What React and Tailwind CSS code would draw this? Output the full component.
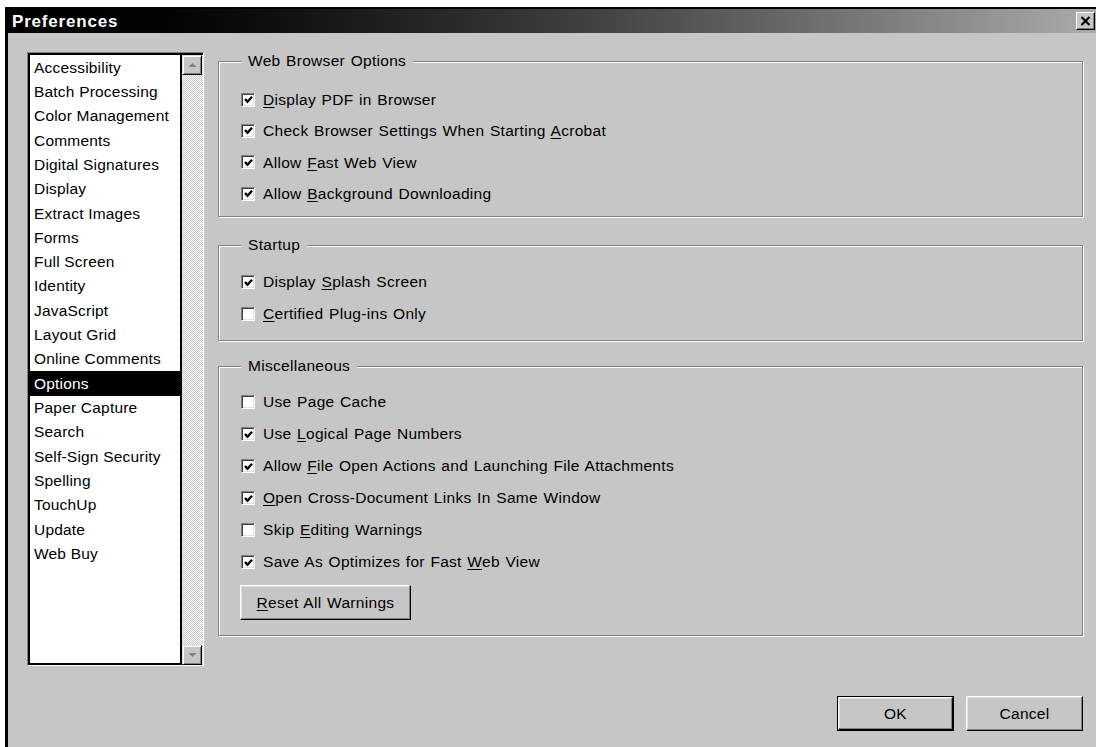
import React from 'react';

// Classic Win9x-style "Preferences" dialog: category list on the left,
// grouped option checkboxes on the right, OK / Cancel at the bottom.

const categories = [
  'Accessibility',
  'Batch Processing',
  'Color Management',
  'Comments',
  'Digital Signatures',
  'Display',
  'Extract Images',
  'Forms',
  'Full Screen',
  'Identity',
  'JavaScript',
  'Layout Grid',
  'Online Comments',
  'Options',
  'Paper Capture',
  'Search',
  'Self-Sign Security',
  'Spelling',
  'TouchUp',
  'Update',
  'Web Buy',
];

// label split as [before, access key, after]
const webOptions = [
  { parts: ['', 'D', 'isplay PDF in Browser'], checked: true },
  { parts: ['Check Browser Settings When Starting ', 'A', 'crobat'], checked: true },
  { parts: ['Allow ', 'F', 'ast Web View'], checked: true },
  { parts: ['Allow ', 'B', 'ackground Downloading'], checked: true },
];

const startupOptions = [
  { parts: ['Display ', 'S', 'plash Screen'], checked: true },
  { parts: ['', 'C', 'ertified Plug-ins Only'], checked: false },
];

const miscOptions = [
  { parts: ['Use Page Cache', '', ''], checked: false },
  { parts: ['Use ', 'L', 'ogical Page Numbers'], checked: true },
  { parts: ['Allow ', 'F', 'ile Open Actions and Launching File Attachments'], checked: true },
  { parts: ['', 'O', 'pen Cross-Document Links In Same Window'], checked: true },
  { parts: ['Skip ', 'E', 'diting Warnings'], checked: false },
  { parts: ['Save As Optimizes for Fast ', 'W', 'eb View'], checked: true },
];

const Label = ({ parts }) => (
  <span className="whitespace-nowrap tracking-[0.3px] [word-spacing:1px]">
    {parts[0]}
    {parts[1] && <span className="underline underline-offset-2">{parts[1]}</span>}
    {parts[2]}
  </span>
);

const CheckBox = ({ checked }) => (
  <span className="w-[14px] h-[14px] flex-shrink-0 bg-white border border-t-[#808080] border-l-[#808080] border-r-white border-b-white shadow-[inset_1px_1px_0_#404040,inset_-1px_-1px_0_#dfdfdf] flex items-center justify-center">
    {checked && (
      <svg width="9" height="9" viewBox="0 0 9 9">
        <path d="M1 4 L3.5 6.8 L8 1.8" stroke="#000" strokeWidth="2.4" fill="none" />
      </svg>
    )}
  </span>
);

const OptionRow = ({ item, rowClass }) => (
  <div className={`flex items-center gap-[8px] ${rowClass}`}>
    <CheckBox checked={item.checked} />
    <Label parts={item.parts} />
  </div>
);

// etched group box with caption sitting on the top edge
const GroupBox = ({ title, className, children }) => (
  <div
    className={`relative border border-[#808080] shadow-[inset_1px_1px_0_#fff,1px_1px_0_#fff] pl-[22px] ${className}`}
  >
    <span className="absolute -top-[10px] left-[22px] px-[7px] leading-[18px] bg-[#c6c6c6] tracking-[0.3px] [word-spacing:1px]">
      {title}
    </span>
    {children}
  </div>
);

const RaisedButton = ({ children, isDefault, className }) => (
  <button
    className={`${isDefault ? 'border border-black' : ''} ${className}`}
  >
    <span className="flex items-center justify-center w-full h-full bg-[#c6c6c6] border border-t-white border-l-white border-r-black border-b-black shadow-[inset_-1px_-1px_0_#808080,inset_1px_1px_0_#dfdfdf] tracking-[0.3px] [word-spacing:1px]">
      {children}
    </span>
  </button>
);

const ArrowButton = ({ down }) => (
  <div className="w-[20px] h-[20px] flex-shrink-0 bg-[#c6c6c6] border border-t-[#dfdfdf] border-l-[#dfdfdf] border-r-black border-b-black shadow-[inset_1px_1px_0_#fff,inset_-1px_-1px_0_#808080] flex items-center justify-center">
    <svg width="9" height="6" viewBox="0 0 9 6">
      {down ? (
        <path d="M0.5 1 L8.5 1 L4.5 5 Z" fill="#808080" />
      ) : (
        <path d="M0.5 5 L8.5 5 L4.5 1 Z" fill="#808080" />
      )}
    </svg>
  </div>
);

const CategoryList = () => (
  <div className="w-[177px] h-[614px] flex border border-t-[#808080] border-l-[#808080] border-r-white border-b-white">
    <div className="flex flex-1 border-t-2 border-l-2 border-black">
      <div className="flex-1 bg-white border-r-2 border-b-2 border-black">
        {categories.map((name) => (
          <div
            key={name}
            className={`h-[24.33px] flex items-center pl-[4px] whitespace-nowrap tracking-[0.2px] ${
              name === 'Options' ? 'bg-black text-white' : 'text-black'
            }`}
          >
            {name}
          </div>
        ))}
      </div>
      <div className="w-[21px] flex flex-col bg-[repeating-conic-gradient(#c6c6c6_0%_25%,#ffffff_0%_50%)] bg-[length:2px_2px]">
        <ArrowButton />
        <div className="flex-1" />
        <ArrowButton down />
      </div>
    </div>
  </div>
);

export default function App() {
  return (
    <div className="w-[1096px] h-[747px] overflow-hidden bg-white pt-[7px] pl-[5px] font-['Liberation_Sans',Arial,sans-serif] text-[15.5px] text-black">
      <div className="h-full flex flex-col border-l-[3px] border-t-2 border-black">
        {/* title bar */}
        <div className="h-[24px] flex-shrink-0 flex items-center justify-between bg-gradient-to-r from-black via-[#3a3a3a] to-[#ababab] pl-[4px] pr-[1px]">
          <span className="text-white font-bold text-[17px] tracking-[0.8px] leading-none">
            Preferences
          </span>
          <div className="w-[19px] h-[18px] bg-[#c6c6c6] border border-t-white border-l-white border-r-black border-b-black shadow-[inset_-1px_-1px_0_#808080] flex items-center justify-center">
            <svg width="11" height="10" viewBox="0 0 11 10">
              <path d="M1.5 1 L9.5 9 M9.5 1 L1.5 9" stroke="#000" strokeWidth="2.2" />
            </svg>
          </div>
        </div>

        {/* dialog body */}
        <div className="flex-1 bg-[#c6c6c6] flex flex-col pl-[19px] pr-[13px] pt-[19px]">
          <div className="flex items-start">
            <CategoryList />

            <div className="flex-1 ml-[14px] mt-[9px] flex flex-col">
              <GroupBox title="Web Browser Options" className="h-[156px] pt-[22px]">
                {webOptions.map((item, i) => (
                  <OptionRow key={i} item={item} rowClass="h-[31.3px]" />
                ))}
              </GroupBox>

              <GroupBox title="Startup" className="h-[96px] pt-[20px] mt-[28px]">
                {startupOptions.map((item, i) => (
                  <OptionRow key={i} item={item} rowClass="h-[32px]" />
                ))}
              </GroupBox>

              <GroupBox title="Miscellaneous" className="h-[270px] pt-[19px] mt-[25px]">
                {miscOptions.map((item, i) => (
                  <OptionRow key={i} item={item} rowClass="h-[32px]" />
                ))}
                <RaisedButton className="mt-[7px] -ml-[1px] w-[171px] h-[35px]">
                  <span>
                    <span className="underline underline-offset-2">R</span>eset All Warnings
                  </span>
                </RaisedButton>
              </GroupBox>
            </div>
          </div>

          <div className="flex justify-end gap-[12px] mt-[30px]">
            <RaisedButton isDefault className="w-[117px] h-[35px]">
              OK
            </RaisedButton>
            <RaisedButton className="w-[117px] h-[35px]">Cancel</RaisedButton>
          </div>
        </div>
      </div>
    </div>
  );
}
